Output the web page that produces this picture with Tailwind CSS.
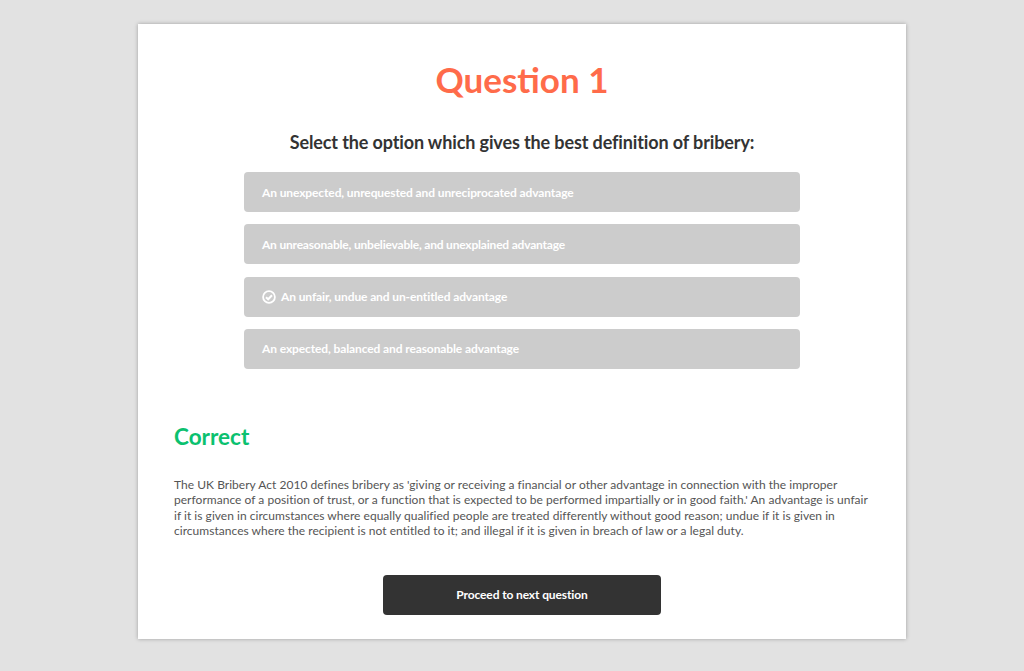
<!DOCTYPE html>
<html lang="en">
<head>
  <meta charset="UTF-8" />
  <title>Question 1</title>
  <script src="https://cdn.jsdelivr.net/npm/@tailwindcss/browser@4"></script>
</head>
<body class="bg-[#e2e2e2] h-[671px] overflow-hidden font-['Lato','Noto_Sans',sans-serif]">

  <!-- Quiz card -->
  <div class="ml-[138px] mt-[24px] w-[768px] h-[615px] bg-white shadow-[0_0_4px_rgba(0,0,0,0.3)] px-[36px] flex flex-col">
    <h1 class="mt-[31px] text-center text-[35px] leading-[48px] font-bold text-[#ff6b4a]">Question 1</h1>
    <h2 class="mt-[27px] text-center text-[18px] leading-[24px] font-bold tracking-[-0.12px] text-[#333333]">Select the option which gives the best definition of bribery:</h2>

    <!-- Options -->
    <div class="mt-[18px] mx-auto w-[556px] flex flex-col gap-[12.3px] text-[12px] leading-[18px] font-bold tracking-[-0.11px] text-white">
      <div class="h-[40px] rounded-[4px] bg-[#cccccc] px-[18px] pt-[1px] flex items-center">An unexpected, unrequested and unreciprocated advantage</div>
      <div class="h-[40px] rounded-[4px] bg-[#cccccc] px-[18px] pt-[1px] flex items-center tracking-[-0.2px]">An unreasonable, unbelievable, and unexplained advantage</div>
      <div class="h-[40px] rounded-[4px] bg-[#cccccc] px-[18px] pt-[1px] flex items-center gap-[5px]">
        <svg class="w-[14px] h-[14px] -mt-[1px]" viewBox="0 0 14 14" fill="none" stroke="white" stroke-width="1.8"><circle cx="7" cy="7" r="5.9"/><path d="M4 7.2l2.2 2.1 3.8-4" stroke-width="2"/></svg>
        An unfair, undue and un-entitled advantage
      </div>
      <div class="h-[40px] rounded-[4px] bg-[#cccccc] px-[18px] pt-[1px] flex items-center">An expected, balanced and reasonable advantage</div>
    </div>

    <h3 class="mt-[52px] text-[22.5px] leading-[32px] font-bold text-[#0bc16f]">Correct</h3>
    <p class="mt-[24px] text-[12px] leading-[15.4px] tracking-[0.03px] text-[#555555]">The UK Bribery Act 2010 defines bribery as 'giving or receiving a financial or other advantage in connection with the improper<br />performance of a position of trust, or a function that is expected to be performed impartially or in good faith.' An advantage is unfair<br />if it is given in circumstances where equally qualified people are treated differently without good reason; undue if it is given in<br />circumstances where the recipient is not entitled to it; and illegal if it is given in breach of law or a legal duty.</p>

    <button class="mt-[36px] mx-auto w-[278px] h-[40px] rounded-[4px] bg-[#333333] text-white text-[12px] tracking-[-0.12px] font-bold">Proceed to next question</button>
  </div>

</body>
</html>
